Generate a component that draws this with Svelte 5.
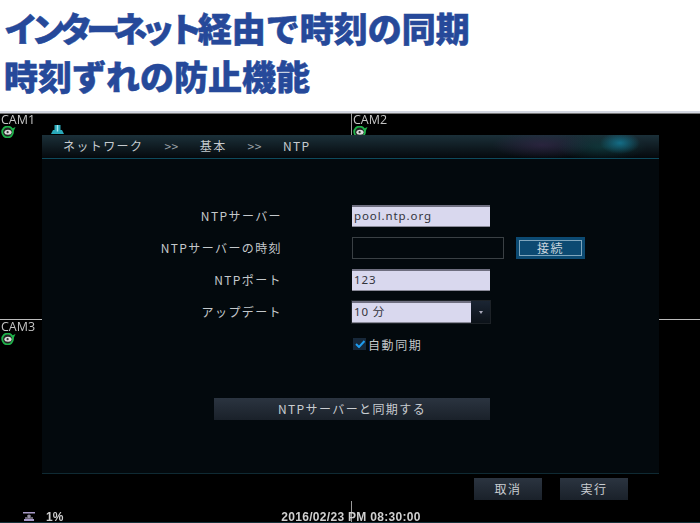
<script>
  let rows = [
    { label: "NTPサーバー", value: "pool.ntp.org" },
  ];
  let cams = ["CAM1", "CAM2", "CAM3", ""];
</script>

{#snippet camIcon()}
  <svg class="cam-icon" width="15" height="12" viewBox="0 0 15 12">
    <circle cx="6.6" cy="6" r="5.4" fill="#222" stroke="#1fb24a" stroke-width="1.8" />
    <ellipse cx="7" cy="6.2" rx="3.6" ry="2.5" fill="#dcdcdc" />
    <path d="M10 3 L14.5 1 L12.5 5.5 Z" fill="#1fb24a" />
    <circle cx="6.6" cy="6.2" r="1.1" fill="#333" />
  </svg>
{/snippet}

<div class="page">
  <header class="title">
    <h1><span class="tight">インターネット</span>経由で時刻の同期</h1>
    <h1>時刻ずれの防止機能</h1>
  </header>

  <main class="screen">
    <div class="cams">
      {#each cams as cam}
        <div class="cam">
          {#if cam}
            <span class="cam-name">{cam}</span>
            {@render camIcon()}
          {/if}
        </div>
      {/each}
    </div>

    <svg class="net-icon" width="13" height="10" viewBox="0 0 13 10">
      <path d="M3.5 0 H9.5 V5 H11 L13 9 H0 L2 5 H3.5 Z" fill="#29a9ba" />
      <path d="M6.5 0 V6.5" stroke="#a8e6ee" stroke-width="1.4" />
    </svg>

    <section class="dialog">
      <div class="crumbs">
        <span>ネットワーク</span>
        <span class="sep">&gt;&gt;</span>
        <span>基本</span>
        <span class="sep">&gt;&gt;</span>
        <span>NTP</span>
      </div>

      <div class="body">
        <div class="form">
          {#each rows as row}
            <div class="label">{row.label}</div>
            <div class="input">{row.value}</div>
          {/each}

          <div class="label">NTPサーバーの時刻</div>
          <div class="with-btn">
            <div class="input empty"></div>
            <button class="connect"><span>接続</span></button>
          </div>

          <div class="label">NTPポート</div>
          <div class="input">123</div>

          <div class="label">アップデート</div>
          <div class="select">
            <div class="input">10 分</div>
            <div class="arrow"><i></i></div>
          </div>

          <div></div>
          <label class="auto">
            <span class="check">
              <svg width="10" height="8" viewBox="0 0 10 8">
                <path d="M1 4 L4 7 L9.5 1" fill="none" stroke="#1e9cf0" stroke-width="2" />
              </svg>
            </span>
            自動同期
          </label>
        </div>

        <button class="btn sync">NTPサーバーと同期する</button>
      </div>

      <div class="actions">
        <button class="btn act">取消</button>
        <button class="btn act">実行</button>
      </div>
    </section>

    <footer class="status">
      <svg width="13" height="9" viewBox="0 0 13 9">
        <path d="M0 0 H12 V1.5 H0 Z M1 7 H11 V9 H1 Z" fill="#a99bc9" />
        <path d="M6 2.5 V6 M4 4 H8 M2 6 H10" stroke="#c9c0dd" stroke-width="1" />
      </svg>
      <span class="pct">1%</span>
      <span class="date">2016/02/23 PM 08:30:00</span>
    </footer>
  </main>
</div>

<style>
  :global(body) {
    margin: 0;
    background: #000;
  }

  .page {
    width: 700px;
    height: 523px;
    display: flex;
    flex-direction: column;
    overflow: hidden;
    font-family: "Noto Sans CJK JP", "Liberation Sans", sans-serif;
  }

  .title {
    background: #fff;
    border-bottom: 2px solid #d3d6e0;
    box-sizing: border-box;
    height: 113px;
    padding: 10px 0 0 4px;
    display: flex;
    flex-direction: column;
    gap: 12px;
  }

  .title h1 {
    margin: 0;
    font-size: 34px;
    line-height: 36px;
    font-weight: 900;
    color: #26499a;
    white-space: nowrap;
    -webkit-text-stroke: 0.5px #26499a;
  }

  .tight {
    letter-spacing: -6.6px;
    margin-right: 2px;
  }

  .screen {
    position: relative;
    flex: 1;
    background: #000;
    color: #d6d6d6;
    box-shadow: inset 0 1px 0 #777;
    filter: blur(0.5px);
  }

  .cams {
    display: grid;
    grid-template-columns: 351px 349px;
    grid-template-rows: 206px 204px;
    height: 100%;
  }

  .cam {
    box-sizing: border-box;
    padding: 1px 0 0 1px;
    display: flex;
    flex-direction: column;
    align-items: flex-start;
  }

  .cam:nth-child(2) {
    border-left: 1px solid #999;
  }

  .cam:nth-child(3) {
    border-top: 1px solid #bbb;
  }

  .cam:nth-child(4) {
    border-top: 1px solid #bbb;
    border-left: 1px solid #999;
  }

  .cam-name {
    font-family: "Open Sans", "Liberation Sans", sans-serif;
    font-size: 12.5px;
    line-height: 11px;
    color: #c4c4c4;
  }

  .cam-icon {
    margin-top: 1px;
  }

  .net-icon {
    position: absolute;
    left: 51px;
    top: 12px;
  }

  .dialog {
    position: absolute;
    left: 42px;
    top: 22px;
    width: 617px;
    height: 366px;
    display: flex;
    flex-direction: column;
    background: #000;
  }

  .crumbs {
    height: 24px;
    box-sizing: border-box;
    padding: 0 0 2px 21px;
    display: flex;
    align-items: center;
    gap: 21px;
    font-size: 12px;
    letter-spacing: 1.4px;
    color: #c6cbcf;
    border-bottom: 1px solid #0e4a5c;
    background:
      radial-gradient(ellipse 20px 11px at 578px 8px, rgba(20, 125, 155, 0.8), transparent),
      radial-gradient(ellipse 45px 14px at 560px 12px, rgba(15, 90, 90, 0.4), transparent),
      radial-gradient(ellipse 50px 14px at 500px 10px, rgba(65, 40, 85, 0.5), transparent),
      linear-gradient(#1b3039, #05090d);
  }

  .sep {
    color: #9aa2a8;
    letter-spacing: 0.5px;
  }

  .body {
    height: 315px;
    box-sizing: border-box;
    background: #03090d;
    border-bottom: 1px solid #0f2a33;
    padding-top: 46px;
    display: flex;
    flex-direction: column;
  }

  .form {
    display: grid;
    grid-template-columns: 240px 233px;
    column-gap: 70px;
    row-gap: 10px;
    grid-auto-rows: 22px;
    font-size: 12px;
    letter-spacing: 1.4px;
    color: #c4c8cb;
    align-items: center;
  }

  .label {
    text-align: right;
    padding-bottom: 2px;
  }

  .input {
    width: 138px;
    height: 22px;
    box-sizing: border-box;
    background: #d9d8ee;
    border-top: 2px solid #6f6f80;
    border-bottom: 1px solid #8a8a98;
    padding-left: 2px;
    color: #33343c;
    font-size: 11.5px;
    line-height: 18px;
    letter-spacing: 0.9px;
    font-family: "Noto Sans", "Noto Sans CJK JP", sans-serif;
  }

  .with-btn {
    display: flex;
    align-items: center;
    gap: 12px;
  }

  .input.empty {
    width: 152px;
    background: #03090d;
    border: 1px solid #3a4044;
  }

  .connect {
    width: 69px;
    height: 22px;
    padding: 2px;
    border: 1px solid #0c4a72;
    background: #0c4a72;
    font: inherit;
    letter-spacing: 1.4px;
    color: #c8d4dc;
    display: flex;
  }

  .connect span {
    flex: 1;
    line-height: 14px;
    border: 1px solid #7fa6bd;
  }

  .select {
    display: flex;
    width: 138px;
    height: 22px;
    box-shadow: 0 0 0 1px #1d2227;
  }

  .select .input {
    width: 119px;
    flex: none;
  }

  .arrow {
    flex: 1;
    display: flex;
    align-items: center;
    justify-content: center;
    background: linear-gradient(#1b2533, #0c1219);
  }

  .arrow i {
    width: 0;
    height: 0;
    border: 2px solid transparent;
    border-top: 3px solid #aab;
    margin-top: 2px;
  }

  .auto {
    display: flex;
    align-items: center;
    gap: 2px;
    margin-left: 1px;
    font-size: 12px;
    letter-spacing: 1.6px;
  }

  .check {
    width: 13px;
    height: 12px;
    box-sizing: border-box;
    background: #17283a;
    display: flex;
    align-items: center;
    justify-content: center;
  }

  .btn {
    border: none;
    background: linear-gradient(#2b3440, #1a212a);
    color: #c9cdd1;
    font: inherit;
    font-size: 12px;
    letter-spacing: 1.4px;
    padding: 0 0 2px;
  }

  .sync {
    width: 276px;
    height: 22px;
    margin: 43px 0 0 172px;
  }

  .actions {
    display: flex;
    justify-content: flex-end;
    gap: 18px;
    padding: 4px 31px 0 0;
  }

  .act {
    width: 68px;
    height: 22px;
    font-size: 12px;
    letter-spacing: 1.6px;
  }

  .status {
    position: absolute;
    left: 0;
    right: 0;
    bottom: 0;
    height: 12px;
    box-sizing: border-box;
    padding-left: 23px;
    display: flex;
    align-items: center;
    font-family: "Liberation Sans", sans-serif;
    font-size: 12px;
    font-weight: 700;
    color: #cfcfcf;
    border-bottom: 1px solid #16323a;
  }

  .pct {
    margin-left: 10px;
  }

  .date {
    margin-left: 218px;
    letter-spacing: 0.3px;
  }
</style>
